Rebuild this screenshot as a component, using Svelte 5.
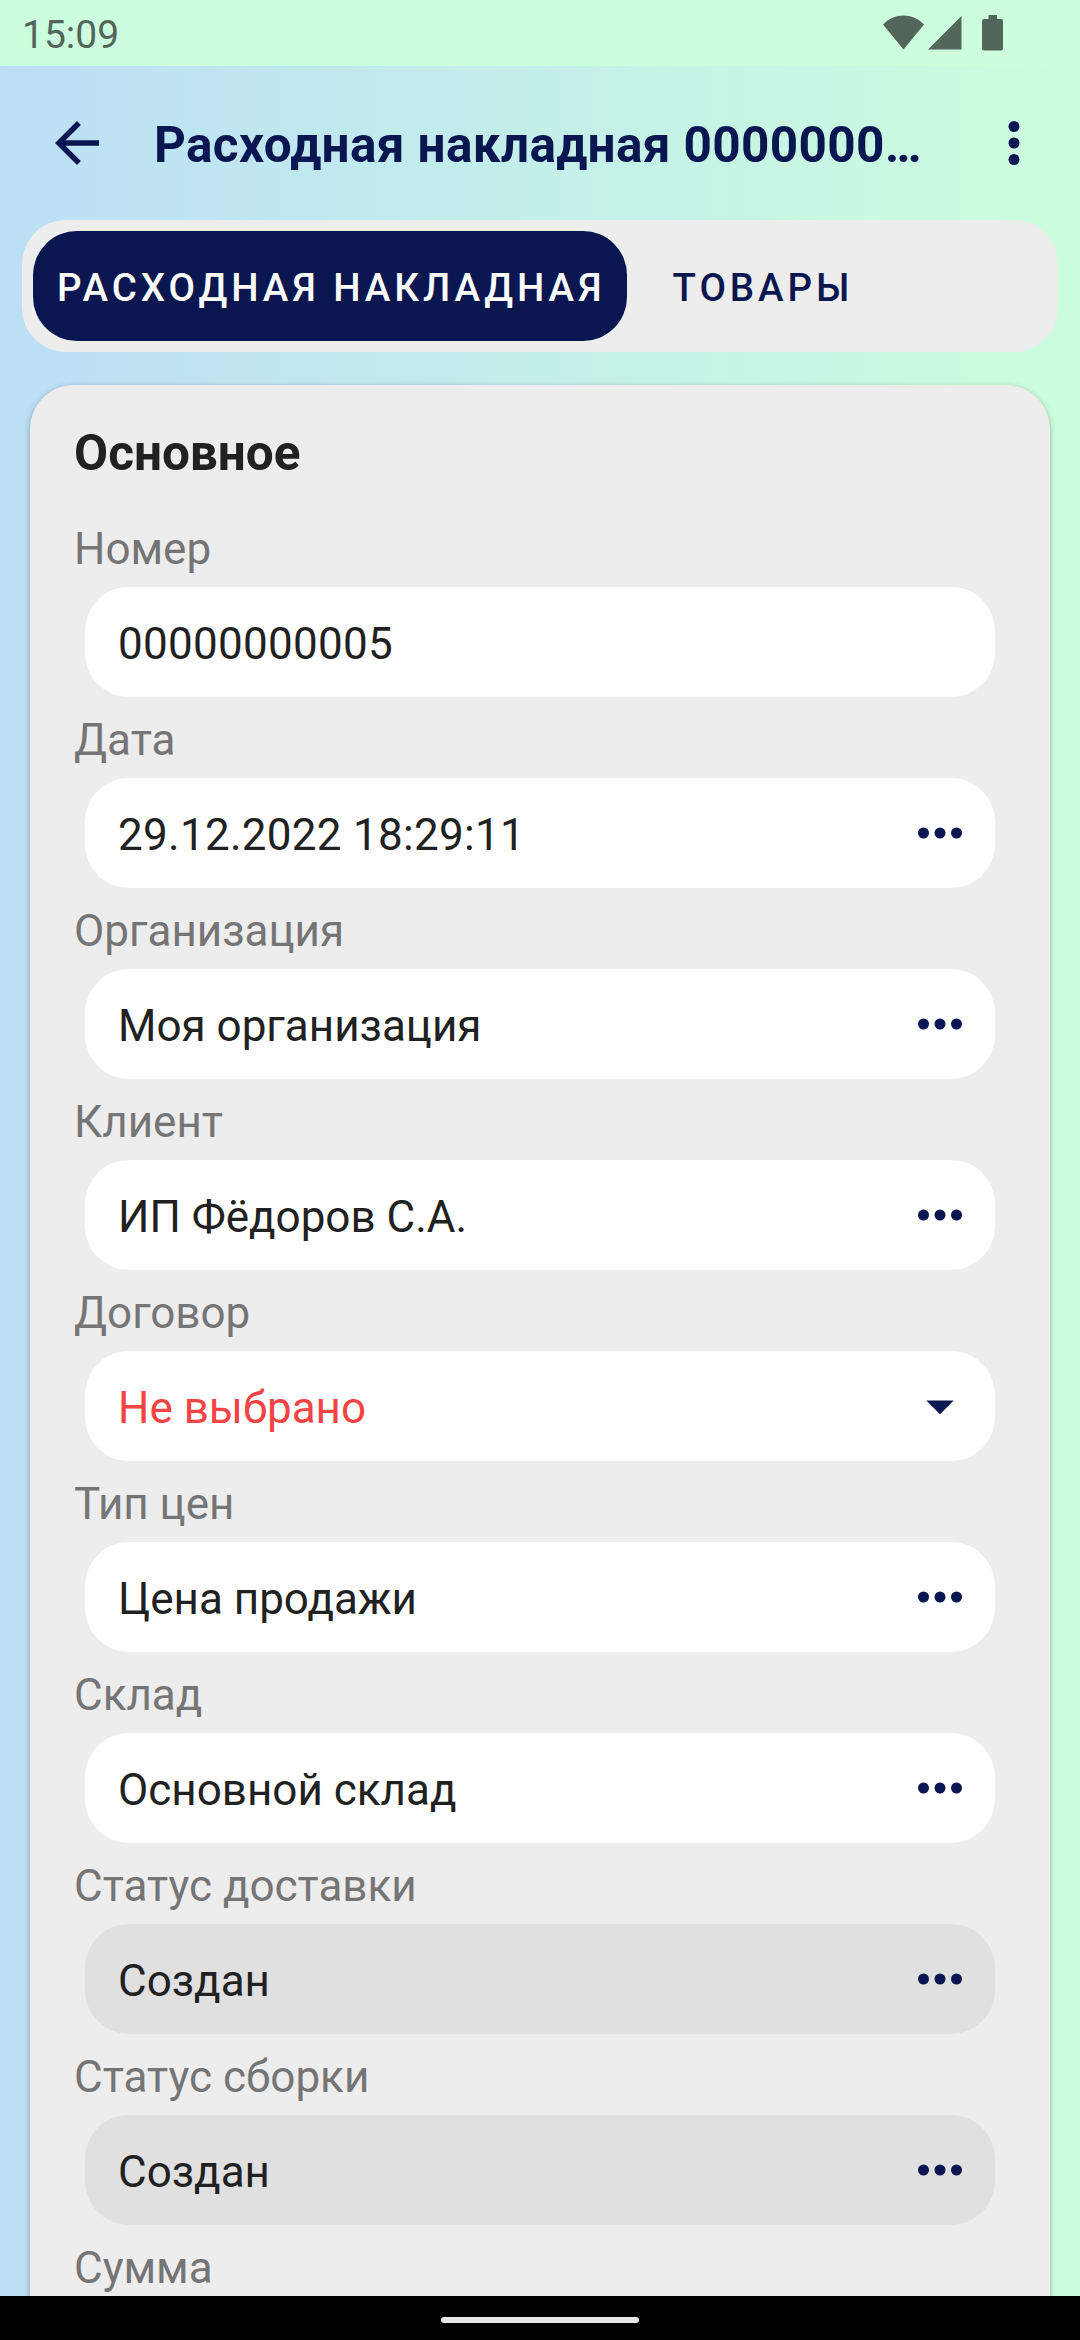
<script lang="ts">

    interface Field {
        label: string;
        value: string;
        action?: 'more' | 'dropdown';
        empty?: boolean;
        disabled?: boolean;
        numeric?: boolean;
    }

    const title = 'Расходная накладная 0000000…';

    const tabs = ['Расходная накладная', 'Товары'];
    let activeTab = $state(0);

    const fields: Field[] = [
        { label: 'Номер', value: '00000000005', numeric: true },
        { label: 'Дата', value: '29.12.2022 18:29:11', action: 'more', numeric: true },
        { label: 'Организация', value: 'Моя организация', action: 'more' },
        { label: 'Клиент', value: 'ИП Фёдоров С.А.', action: 'more' },
        { label: 'Договор', value: 'Не выбрано', action: 'dropdown', empty: true },
        { label: 'Тип цен', value: 'Цена продажи', action: 'more' },
        { label: 'Склад', value: 'Основной склад', action: 'more' },
        { label: 'Статус доставки', value: 'Создан', action: 'more', disabled: true },
        { label: 'Статус сборки', value: 'Создан', action: 'more', disabled: true },
        { label: 'Сумма', value: '' }
    ];

</script>

<div class="screen">
    <div class="status-bar">
        <span class="time">15:09</span>
        <svg class="status-icons" width="122" height="38" viewBox="0 0 122 38">
            <path d="M1 10.500C12.500 -1.500 30.500 -1.500 42 10.500L21.500 35.500z" />
            <path d="M46 35.500L79.500 2V35.500z" />
            <path d="M106.500 1h8.500v4h4q2 0 2 2v27.500q0 2-2 2h-17q-2 0-2-2v-27.500q0-2 2-2h4.500z" />
        </svg>
    </div>

    <header class="toolbar">
        <button class="icon-button" aria-label="Назад">
            <svg viewBox="0 0 24 24"><path d="M20 11H7.830l5.590-5.590L12 4l-8 8 8 8 1.410-1.410L7.830 13H20v-2z" /></svg>
        </button>
        <h1>{title}</h1>
        <button class="icon-button" aria-label="Меню">
            <svg viewBox="0 0 24 24">
                <circle cx="12" cy="6" r="2" />
                <circle cx="12" cy="12" r="2" />
                <circle cx="12" cy="18" r="2" />
            </svg>
        </button>
    </header>

    <nav class="tabs">
        {#each tabs as tab, i}
            <button class="tab" class:active={i === activeTab} onclick={() => (activeTab = i)}>{tab}</button>
        {/each}
    </nav>

    <main>
        <section class="card">
            <h2>Основное</h2>
            {#each fields as field}
                <div class="label">{field.label}</div>
                <div class="field" class:empty={field.empty} class:disabled={field.disabled}>
                    <span class="value" class:numeric={field.numeric}>{field.value}</span>
                    {#if field.action === 'more'}
                        <svg viewBox="0 0 24 24">
                            <circle cx="6" cy="12" r="2" />
                            <circle cx="12" cy="12" r="2" />
                            <circle cx="18" cy="12" r="2" />
                        </svg>
                    {:else if field.action === 'dropdown'}
                        <svg viewBox="0 0 24 24"><path d="M7 10l5 5 5-5z" /></svg>
                    {/if}
                </div>
            {/each}
        </section>
    </main>

    <div class="nav-bar">
        <div class="handle"></div>
    </div>
</div>

<style>
    :global(body) {
        margin: 0;
    }

    .screen {
        display: flex;
        flex-direction: column;
        width: 1080px;
        height: 2340px;
        overflow: hidden;
        background: linear-gradient(to right, #bbdff6, #ccffdd);
        font-family: Roboto, sans-serif;
        color: #212121;
    }

    .status-bar {
        display: flex;
        flex: none;
        justify-content: space-between;
        box-sizing: border-box;
        height: 66px;
        padding: 14px 76px 0 22px;
        background: #ccffdd;
    }

    .time {
        font-size: 39px;
        line-height: 42px;
        color: #52665a;
    }

    .status-icons {
        fill: #52665a;
    }

    .toolbar {
        display: flex;
        flex: none;
        align-items: center;
        box-sizing: border-box;
        height: 154px;
        padding: 0 33px 0 44px;
    }

    button {
        border: 0;
        padding: 0;
        background: none;
        font-family: inherit;
        color: #0a1650;
    }

    svg {
        flex: none;
        fill: #0a1650;
    }

    .icon-button svg, .field svg {
        display: block;
        width: 66px;
        height: 66px;
    }

    h1 {
        flex: 1;
        margin: 4px 44px 0;
        font-size: 49.5px;
        font-weight: 700;
        line-height: 64px;
        letter-spacing: 0.36px;
        color: #0a1650;
        white-space: nowrap;
    }

    .tabs {
        display: flex;
        flex: none;
        box-sizing: border-box;
        height: 132px;
        margin: 0 22px;
        padding: 11px;
        border-radius: 44px;
        background: #ededed;
    }

    .tab {
        padding: 3px 21px 0 24px;
        border-radius: 44px;
        font-size: 38.5px;
        font-weight: 500;
        letter-spacing: 3.92px;
        text-transform: uppercase;
    }

    .tab + .tab {
        padding-left: 46px;
    }

    .tab.active {
        background: #0a1650;
        color: #fff;
    }

    main {
        flex: 1;
        min-height: 0;
        overflow: hidden;
        padding: 33px 30px 0;
    }

    .card {
        padding: 0 55px 0 44px;
        border-radius: 44px;
        background: #ededed;
        box-shadow: 0 2px 6px rgba(0, 0, 0, 0.3);
    }

    h2 {
        box-sizing: border-box;
        height: 121px;
        margin: 0;
        padding-top: 36px;
        font-size: 49.5px;
        font-weight: 700;
        line-height: 64px;
    }

    .label {
        box-sizing: border-box;
        height: 81px;
        padding-top: 5px;
        font-size: 44px;
        line-height: 77px;
        color: #757575;
    }

    .field {
        display: flex;
        align-items: center;
        justify-content: space-between;
        box-sizing: border-box;
        height: 110px;
        margin-left: 11px;
        padding: 0 22px 0 33px;
        border-radius: 44px;
        background: #fff;
    }

    .field.disabled {
        background: #e0e0e0;
    }

    .value {
        padding-top: 3px;
        font-size: 44px;
    }

    .value.numeric {
        letter-spacing: 0.28px;
    }

    .empty .value {
        color: #f44343;
    }

    .nav-bar {
        display: flex;
        flex: none;
        justify-content: center;
        align-items: center;
        height: 44px;
        background: #000;
    }

    .handle {
        width: 198px;
        height: 6px;
        margin-top: 4px;
        border-radius: 3px;
        background: #e8e8e8;
    }
</style>
